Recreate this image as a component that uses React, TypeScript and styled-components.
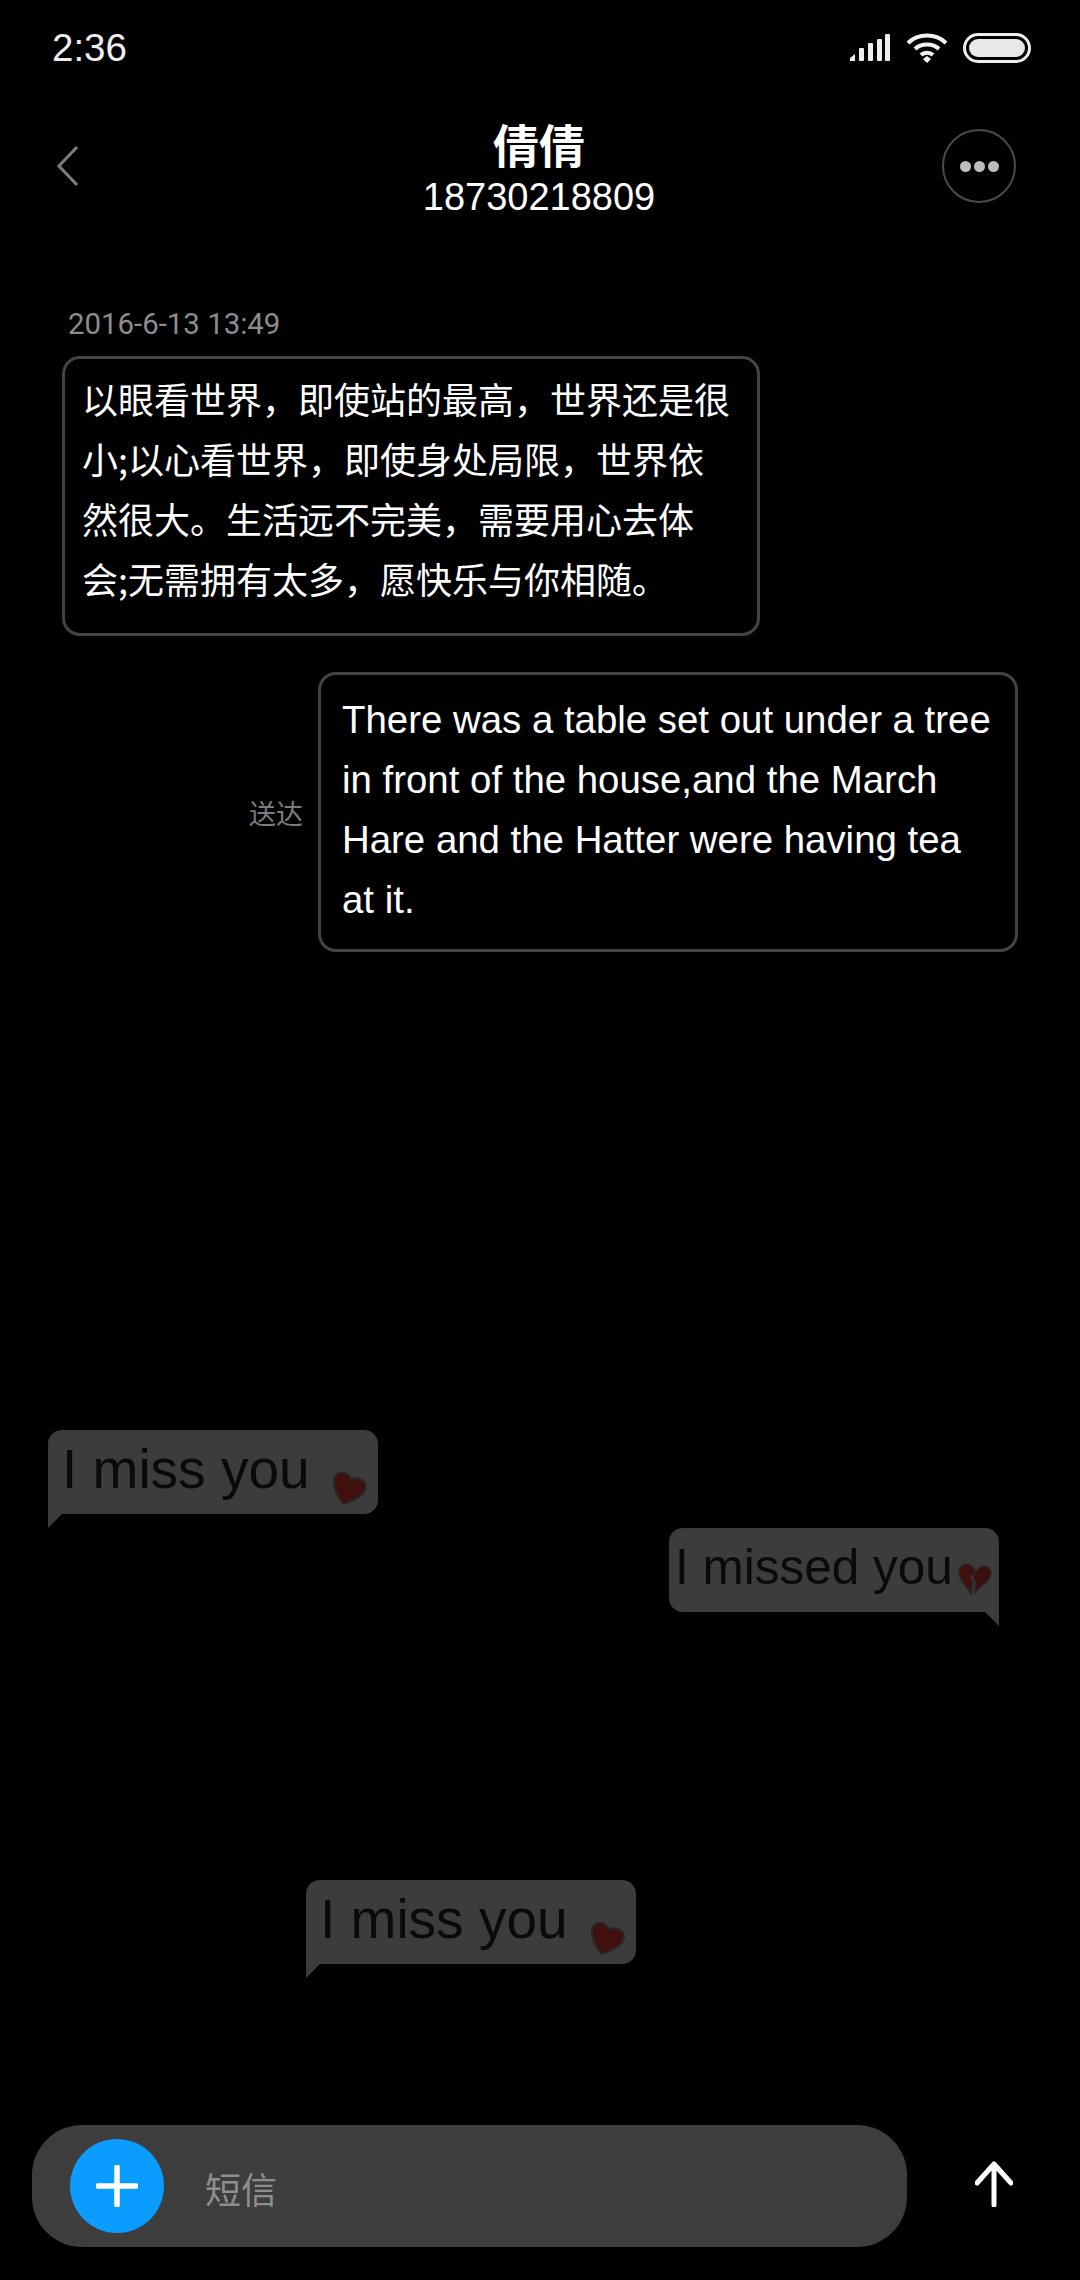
import styled, {createGlobalStyle} from "styled-components";

const GlobalStyle = createGlobalStyle`
  html, body {
    margin: 0;
    background: #000;
  }
`

const BrokenHeart = () => (
    <svg width="38" height="34" viewBox="0 0 36 34">
        <path d="M17 7 C13 0 3 1 2 9 C1 17 10 24 14 32 L16 21 L13 15 L19 10 Z" fill="#40110f" stroke="#2c2525" strokeWidth="1.5"/>
        <path d="M20 8 C25 2 34 4 34 11 C34 19 24 23 17 32 L19 21 L16 15 Z" fill="#3a0f0d" stroke="#2c2525" strokeWidth="1.5"/>
    </svg>
)

const Heart = () => (
    <svg width="36" height="36" viewBox="0 0 34 34">
        <path d="M11 32 C5 26 1 15 2 9 C3 1 14 0 18 9 C23 6 32 9 32 16 C32 24 20 29 11 32 Z" fill="#3f100e" stroke="#2b2626" strokeWidth="2"/>
    </svg>
)

const Sticker = ({right, label, offset, gap}: { right?: boolean, label: string, offset: number, gap: number }) => (
    <StickerBubble $right={right} $offset={offset}>
        <StickerText $right={right}>{label}</StickerText>
        <StickerHeart $right={right} $gap={gap}>{right ? <BrokenHeart/> : <Heart/>}</StickerHeart>
    </StickerBubble>
)

const App = () => {
    return (
        <Page>
            <GlobalStyle/>
            <StatusBar>
                <Time>2:36</Time>
                <StatusIcons>
                    <svg width="42" height="30" viewBox="0 0 42 30">
                        <g fill="#eee">
                            <path d="M1 28 L1 25 L6 21 L6 28 Z"/>
                            <rect x="10" y="15" width="5" height="13" rx="1"/>
                            <rect x="19" y="10" width="5" height="18" rx="1"/>
                            <rect x="28" y="6" width="5" height="22" rx="1"/>
                            <rect x="36" y="1" width="5" height="27" rx="1"/>
                        </g>
                    </svg>
                    <svg width="42" height="32" viewBox="0 0 42 32">
                        <g fill="none" stroke="#f2f2f2" strokeWidth="4">
                            <path d="M2 11 C12 1 30 1 40 11"/>
                            <path d="M9 17 C15 11 27 11 33 17"/>
                            <path d="M15 23 C18 20 24 20 27 23"/>
                        </g>
                        <path d="M17 27 L21 24 L25 27 L21 31 Z" fill="#f2f2f2"/>
                    </svg>
                    <Battery><BatteryFill/></Battery>
                </StatusIcons>
            </StatusBar>

            <Header>
                <BackIcon width="24" height="42" viewBox="0 0 24 42">
                    <path d="M21 2 L3 21 L21 40" fill="none" stroke="#7d7d7d" strokeWidth="3"/>
                </BackIcon>
                <TitleBlock>
                    <Name>倩倩</Name>
                    <Phone>18730218809</Phone>
                </TitleBlock>
                <MoreButton>
                    <Dot/><Dot/><Dot/>
                </MoreButton>
            </Header>

            <Conversation>
                <Stamp>2016-6-13 13:49</Stamp>
                <Bubble>以眼看世界，即使站的最高，世界还是很小;以心看世界，即使身处局限，世界依然很大。生活远不完美，需要用心去体会;无需拥有太多，愿快乐与你相随。</Bubble>
                <SentRow>
                    <Delivered>送达</Delivered>
                    <Bubble $sent>There was a table set out under a tree in front of the house,and the March Hare and the Hatter were having tea at it.</Bubble>
                </SentRow>
            </Conversation>

            <Stickers>
                <Sticker label="I miss you" offset={48} gap={22}/>
                <SecondSticker>
                    <Sticker label="I missed you" offset={669} gap={3} right/>
                </SecondSticker>
                <ThirdSticker>
                    <Sticker label="I miss you" offset={306} gap={22}/>
                </ThirdSticker>
            </Stickers>

            <Composer>
                <InputPill>
                    <AddButton>
                        <svg width="42" height="42" viewBox="0 0 42 42">
                            <path d="M21 2 V40 M2 21 H40" stroke="#fff" strokeWidth="5.5" strokeLinecap="round"/>
                        </svg>
                    </AddButton>
                    <Placeholder>短信</Placeholder>
                </InputPill>
                <SendIcon width="38" height="46" viewBox="0 0 38 46">
                    <path d="M19 44 V3 M2 22 L19 3 L36 22" fill="none" stroke="#fff" strokeWidth="5" strokeLinecap="round" strokeLinejoin="round"/>
                </SendIcon>
            </Composer>
        </Page>
    )
}

const Page = styled.div`
  background: #000;
  box-sizing: border-box;
  color: #fff;
  display: flex;
  flex-direction: column;
  font-family: "Liberation Sans", "Noto Sans CJK SC", sans-serif;
  height: 2280px;
  overflow: hidden;
  width: 1080px;
`

const StatusBar = styled.div`
  align-items: center;
  display: flex;
  height: 96px;
  justify-content: space-between;
  padding: 0 49px 0 52px;
`

const Time = styled.span`
  color: #eee;
  font-family: "Liberation Sans", sans-serif;
  font-size: 38.5px;
`

const StatusIcons = styled.div`
  align-items: center;
  display: flex;
  gap: 15px;
`

const Battery = styled.div`
  align-items: center;
  border: 3px solid #eee;
  border-radius: 15px;
  box-sizing: border-box;
  display: flex;
  height: 30px;
  padding: 3px;
  width: 68px;
`

const BatteryFill = styled.div`
  background: #e8e8e8;
  border-radius: 9px;
  flex: 1;
  height: 100%;
`

const Header = styled.header`
  align-items: center;
  display: flex;
  height: 140px;
  justify-content: space-between;
  padding: 0 64px 0 56px;
  position: relative;
`

const BackIcon = styled.svg`
  display: block;
`

const TitleBlock = styled.div`
  align-items: center;
  display: flex;
  flex-direction: column;
  left: 0;
  position: absolute;
  right: 2px;
  top: 17px;
`

const Name = styled.div`
  font-family: "Noto Sans CJK SC", sans-serif;
  font-size: 46px;
  font-weight: 700;
  line-height: 60px;
  margin-bottom: 3px;
`

const Phone = styled.div`
  font-size: 38px;
  line-height: 42px;
`

const MoreButton = styled.div`
  align-items: center;
  border: 2px solid #4a4a4a;
  border-radius: 50%;
  box-sizing: border-box;
  display: flex;
  gap: 3px;
  height: 74px;
  justify-content: center;
  width: 74px;
`

const Dot = styled.span`
  background: #bdbdbd;
  border-radius: 50%;
  height: 11px;
  width: 11px;
`

const Conversation = styled.main`
  display: flex;
  flex-direction: column;
  padding: 68px 62px 0;
`

const Stamp = styled.div`
  color: #8c8c8c;
  font-family: Roboto, sans-serif;
  font-size: 29.4px;
  line-height: 40px;
  margin: 0 0 12px 6px;
`

const Bubble = styled.div<{ $sent?: boolean }>`
  border: 3px solid #444;
  border-radius: 18px;
  box-sizing: border-box;
  color: #fff;
  font-family: ${p => p.$sent ? `"Liberation Sans", sans-serif` : `"Noto Sans CJK SC", sans-serif`};
  font-size: ${p => p.$sent ? "38.4px" : "36px"};
  height: 280px;
  line-height: 60px;
  padding: ${p => p.$sent ? "15px 20px 15px 21px" : "9px 23px 9px 17px"};
  width: ${p => p.$sent ? "700px" : "698px"};
`

const SentRow = styled.div`
  align-items: center;
  display: flex;
  gap: 15px;
  justify-content: flex-end;
  margin: 36px 0 0;
`

const Delivered = styled.span`
  color: #7c7c7c;
  font-family: "Noto Sans CJK SC", sans-serif;
  font-size: 27px;
`

const Stickers = styled.section`
  display: flex;
  flex: 1;
  flex-direction: column;
  padding-top: 478px;
`

const StickerBubble = styled.div<{ $right?: boolean, $offset: number }>`
  align-items: flex-start;
  background: #3c3c3c;
  border-radius: ${p => p.$right ? "14px 14px 0 14px" : "14px 14px 14px 0"};
  box-sizing: border-box;
  display: flex;
  height: 84px;
  margin-left: ${p => p.$offset}px;
  padding-left: ${p => p.$right ? "6px" : "14px"};
  position: relative;
  width: 330px;

  &::after {
    background: #3c3c3c;
    bottom: -14px;
    clip-path: ${p => p.$right ? "polygon(0 0, 100% 0, 100% 100%)" : "polygon(0 0, 100% 0, 0 100%)"};
    content: "";
    height: 14px;
    ${p => p.$right ? "right: 0;" : "left: 0;"}
    position: absolute;
    width: 14px;
  }
`

const StickerText = styled.span<{ $right?: boolean }>`
  color: #0a0a0a;
  font-family: "Liberation Sans", sans-serif;
  font-size: ${p => p.$right ? "49.5px" : "55px"};
  line-height: 78px;
  white-space: nowrap;
`

const StickerHeart = styled.span<{ $right?: boolean, $gap: number }>`
  display: block;
  margin: ${p => p.$right ? "34px" : "40px"} 0 0 ${p => p.$gap}px;
`

const SecondSticker = styled.div`
  margin-top: 14px;
`

const ThirdSticker = styled.div`
  margin-top: 268px;
`

const Composer = styled.footer`
  align-items: center;
  display: flex;
  justify-content: space-between;
  padding: 0 66px 33px 32px;
`

const InputPill = styled.div`
  align-items: center;
  background: #3d3d3d;
  border-radius: 50px;
  box-sizing: border-box;
  display: flex;
  gap: 41px;
  height: 122px;
  padding-left: 38px;
  width: 875px;
`

const AddButton = styled.div`
  align-items: center;
  background: #0a9cff;
  border-radius: 50%;
  display: flex;
  height: 94px;
  justify-content: center;
  width: 94px;
`

const Placeholder = styled.span`
  color: #8e8e8e;
  font-family: "Noto Sans CJK SC", sans-serif;
  font-size: 36px;
  padding-top: 4px;
`

const SendIcon = styled.svg`
  display: block;
  margin: -4px 1px 0 0;
`

export default App;
